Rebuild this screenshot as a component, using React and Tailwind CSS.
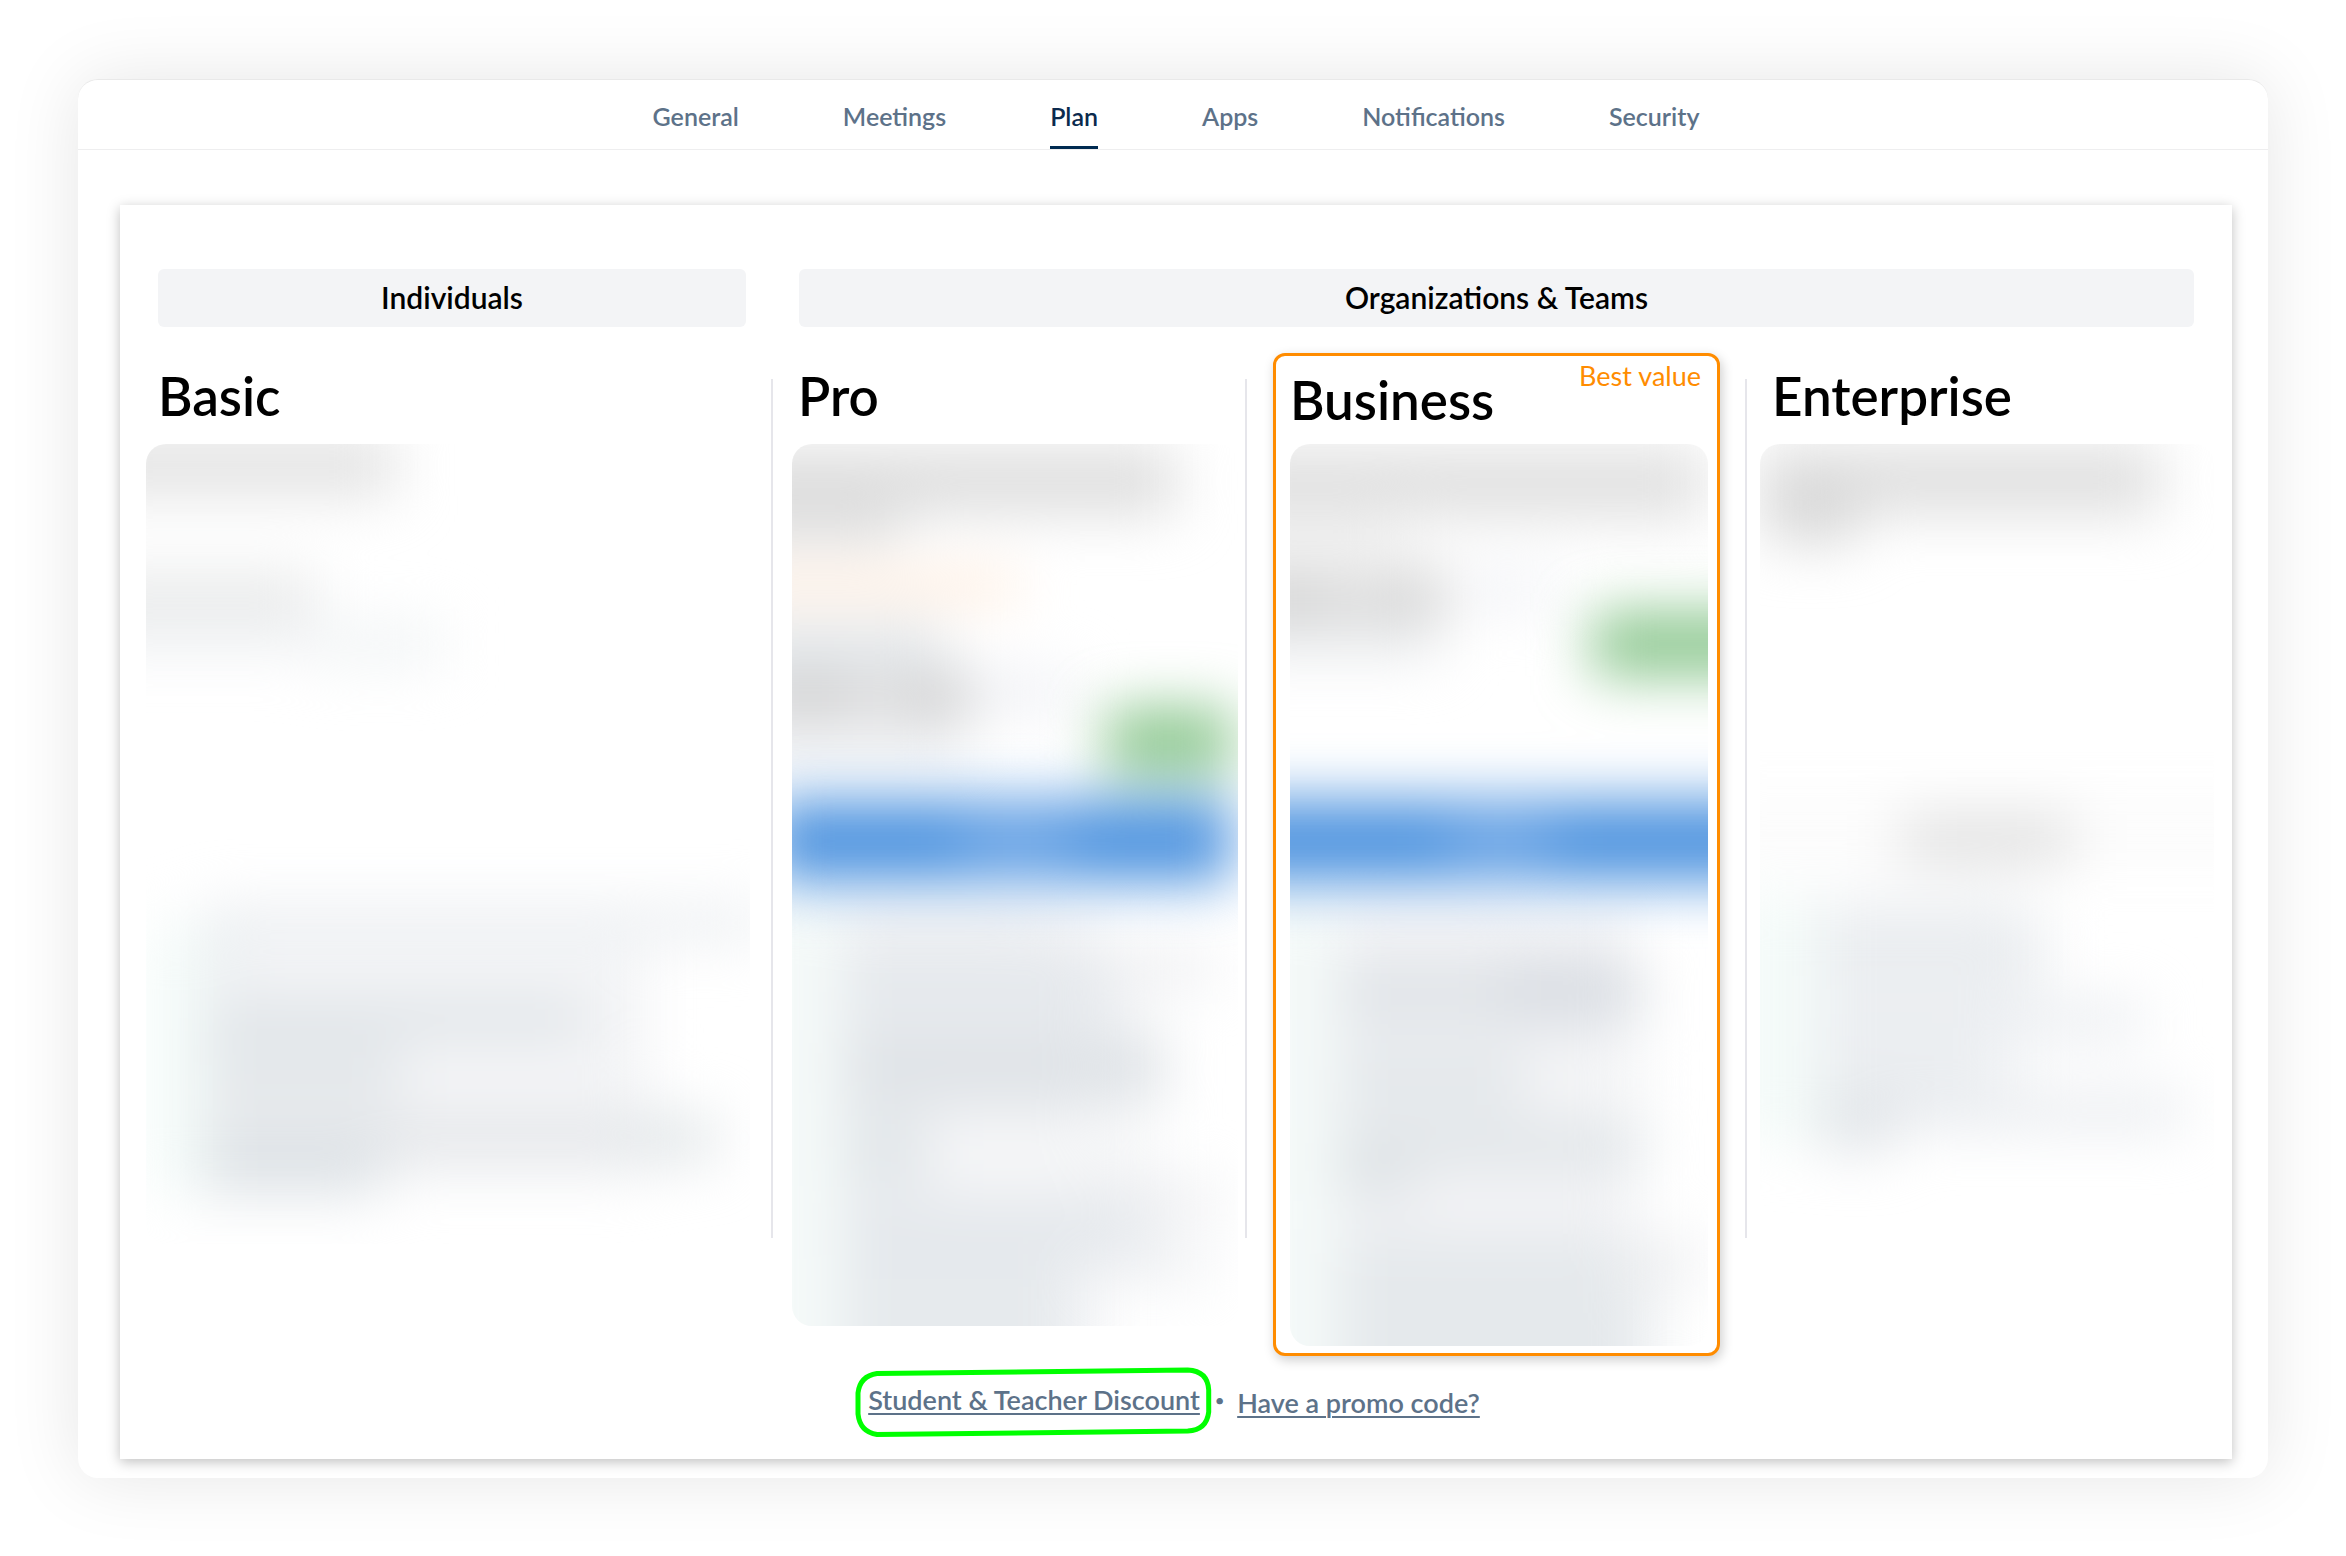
import React from "react";

const tabs = ["General", "Meetings", "Plan", "Apps", "Notifications", "Security"];

// Each smudge is [x, y, width, height, color]
const plans = {
  basic: {
    width: 604,
    height: 800,
    strong: [],
    soft: [
      [-60, -10, 310, 62, "#e3e3e3"],
      [-60, 128, 230, 48, "#e9eaea"],
      [-60, 174, 230, 36, "#f1f3f5"],
      [170, 180, 130, 40, "#f1f4f5"],
      [0, 480, 58, 270, "#f5fcfa"],
      [58, 468, 440, 264, "#f2f3f5"],
      [58, 462, 560, 34, "#ebeef1"],
      [58, 492, 34, 30, "#e5eaed"],
      [92, 500, 400, 30, "#f6f7f9"],
      [58, 556, 380, 36, "#dee3e7"],
      [58, 600, 195, 60, "#e3e7ea"],
      [255, 615, 250, 40, "#f4f5f7"],
      [58, 672, 510, 46, "#e5e7ea"],
      [480, 672, 92, 40, "#e1e6e8"],
      [58, 690, 178, 60, "#dde2e6"],
    ],
  },
  pro: {
    width: 446,
    height: 882,
    strong: [
      [314, 264, 126, 66, "#8cc78f"],
      [-24, 356, 464, 82, "#4d93df"],
      [170, 376, 110, 40, "#74aae8"],
    ],
    soft: [
      [-60, 4, 444, 66, "#dedede"],
      [-60, 60, 170, 38, "#dcdcdc"],
      [-60, 126, 286, 32, "#feecdd"],
      [-60, 178, 210, 40, "#e2e7eb"],
      [-60, 222, 236, 58, "#dededf"],
      [-10, 232, 60, 38, "#cccccc"],
      [120, 232, 56, 44, "#cecece"],
      [175, 226, 110, 44, "#f1f2f6"],
      [-60, 282, 230, 36, "#eff1f4"],
      [-60, 452, 110, 500, "#f5faf9"],
      [50, 466, 256, 500, "#f0f1f4"],
      [50, 462, 190, 36, "#eceef1"],
      [50, 512, 280, 60, "#e4e8ec"],
      [300, 508, 120, 34, "#ebecef"],
      [50, 586, 322, 74, "#dfe3e7"],
      [150, 680, 215, 56, "#f6f7f8"],
      [50, 672, 82, 70, "#e1e6e9"],
      [300, 738, 126, 36, "#ecedf0"],
      [50, 760, 306, 56, "#e4e8ec"],
      [300, 800, 116, 36, "#eceef1"],
      [50, 816, 220, 130, "#e6eaed"],
    ],
  },
  business: {
    width: 418,
    height: 902,
    strong: [
      [302, 168, 200, 64, "#8cc78f"],
      [-80, 356, 600, 82, "#4d93df"],
      [160, 376, 100, 40, "#74aae8"],
    ],
    soft: [
      [-60, 4, 474, 70, "#e0e0e0"],
      [-60, 72, 170, 40, "#f3f3f3"],
      [-60, 124, 216, 56, "#dedede"],
      [-60, 134, 100, 36, "#d0d0d0"],
      [94, 130, 60, 38, "#d2d2d2"],
      [-60, 180, 210, 34, "#ebedef"],
      [175, 126, 90, 40, "#f2f3f7"],
      [-60, 452, 108, 520, "#f5faf9"],
      [48, 470, 292, 510, "#f0f1f4"],
      [48, 462, 180, 34, "#f0f1f4"],
      [48, 522, 306, 54, "#dfe3e7"],
      [210, 520, 130, 52, "#d7dbe1"],
      [48, 600, 182, 70, "#e4e8eb"],
      [250, 610, 110, 50, "#f5f6f7"],
      [48, 684, 308, 40, "#dfe4e7"],
      [48, 710, 72, 40, "#dde2e5"],
      [130, 736, 190, 34, "#f5f5f7"],
      [48, 792, 312, 200, "#e5e9ec"],
      [330, 790, 72, 60, "#eeeff1"],
    ],
  },
  enterprise: {
    width: 454,
    height: 800,
    strong: [],
    soft: [
      [0, 2, 400, 68, "#dfdfdf"],
      [6, 40, 92, 58, "#d7d7d7"],
      [-60, 350, 580, 76, "#fcfcfc"],
      [142, 372, 170, 46, "#dfdfdf"],
      [-30, 450, 86, 250, "#f4fbf9"],
      [60, 450, 200, 220, "#f2f4f6"],
      [60, 474, 226, 66, "#e9ecef"],
      [60, 560, 324, 34, "#e8ebef"],
      [60, 606, 155, 34, "#e9ecef"],
      [60, 650, 364, 34, "#e7eaee"],
      [60, 650, 74, 56, "#dfe3e7"],
    ],
  },
};

const smudge = ([x, y, w, h, color], i) => (
  <rect key={i} x={x} y={y} width={w} height={h} fill={color} />
);

function BlurredDetails({ plan }) {
  return (
    <svg
      className="block w-full rounded-[20px]"
      viewBox={`0 0 ${plan.width} ${plan.height}`}
      aria-hidden="true"
    >
      <g className="blur-[28px]">{plan.soft.map(smudge)}</g>
      <g className="blur-[28px]">{plan.strong.map(smudge)}</g>
    </svg>
  );
}

function Divider({ className }) {
  return <div className={`mt-[26px] h-[859px] w-[2px] shrink-0 bg-[#e6e6eb] ${className}`} />;
}

function PlanColumn({ name, plan, className, titleClass }) {
  return (
    <section className={`min-w-0 basis-0 ${className}`}>
      <h2 className={`h-[91px] pt-[13px] text-[53px] leading-[60px] font-semibold ${titleClass}`}>
        {name}
      </h2>
      <BlurredDetails plan={plan} />
    </section>
  );
}

export default function App() {
  return (
    <div className="min-h-screen bg-white px-[78px] pt-[79px] pb-[77px] font-[Lato,sans-serif] text-black">
      <div className="rounded-[20px] border-t border-[#e9e9e9] bg-white pb-[19px] shadow-[0_0_72px_rgba(0,0,0,0.1)]">
        <nav className="flex h-[70px] justify-center gap-[104px] border-b border-[#eeeeef] pl-[6px]">
          {tabs.map((tab) => (
            <a
              key={tab}
              href="#"
              className={
                tab === "Plan"
                  ? "border-b-3 border-[#002b51] pt-[19px] text-[25px] leading-[34px] font-semibold text-[#0b2a4d]"
                  : "border-b-3 border-transparent pt-[19px] text-[25px] leading-[34px] font-semibold text-[#5d7289]"
              }
            >
              {tab}
            </a>
          ))}
        </nav>

        <main className="mr-[36px] ml-[42px] mt-[55px] bg-white pt-[64px] pb-[24px] shadow-[0_3px_12px_rgba(0,0,0,0.25)]">
          <div className="mx-[38px] flex gap-[53px] text-center text-[30px] leading-[56px] font-semibold">
            <div className="grow-[588] basis-0 rounded-[6px] bg-[#f3f4f6] pb-[2px]">Individuals</div>
            <div className="grow-[1395] basis-0 rounded-[6px] bg-[#f3f4f6] pb-[2px]">
              Organizations &amp; Teams
            </div>
          </div>

          <div className="mt-[26px] flex items-start pr-[18px] pl-[26px]">
            <PlanColumn name="Basic" plan={plans.basic} className="grow-[604]" titleClass="pl-[12px]" />
            <Divider className="mr-[19px] ml-[21px]" />
            <PlanColumn name="Pro" plan={plans.pro} className="grow-[446]" titleClass="pl-[6px]" />
            <Divider className="mr-[26px] ml-[7px]" />
            <div className="min-w-0 grow-[447] basis-0">
              <section className="relative rounded-[12px] border-3 border-[#ff8c00] bg-white pr-[9px] pb-[7px] pl-[14px] shadow-[2px_4px_12px_rgba(0,0,0,0.2)]">
                <span className="absolute top-[4px] right-[16px] text-[27px] leading-[32px] text-[#ff8c00]">
                  Best value
                </span>
                <h2 className="h-[88px] pt-[14px] text-[53px] leading-[60px] font-semibold">
                  Business
                </h2>
                <BlurredDetails plan={plans.business} />
              </section>
            </div>
            <Divider className="mr-[13px] ml-[25px]" />
            <PlanColumn
              name="Enterprise"
              plan={plans.enterprise}
              className="grow-[454]"
              titleClass="pl-[12px]"
            />
          </div>

          <div className="mt-[13px] flex justify-center pr-[16px] text-[27px] leading-[32px] font-semibold text-[#5d7289]">
            <div className="relative px-[12px] pt-[15px] pb-[19px]">
              <svg
                className="absolute inset-0 h-full w-full overflow-visible"
                viewBox="0 0 356 66"
                preserveAspectRatio="none"
                fill="none"
                aria-hidden="true"
              >
                <path
                  d="M21 4.5 L332 1 Q352 2 353 21 L353 43 Q351 61 332 62 L21 65.5 Q4 63 2 45 L2 24 Q4 7 21 4.5 Z"
                  stroke="#00ff00"
                  strokeWidth="5"
                />
              </svg>
              <a href="#" className="relative underline decoration-2 underline-offset-3">
                Student &amp; Teacher Discount
              </a>
            </div>
            <span className="pt-[15px] pr-[13px] pl-[3px] text-[16px]">•</span>
            <a href="#" className="pt-[18px] underline decoration-2 underline-offset-3">
              Have a promo code?
            </a>
          </div>
        </main>
      </div>
    </div>
  );
}
